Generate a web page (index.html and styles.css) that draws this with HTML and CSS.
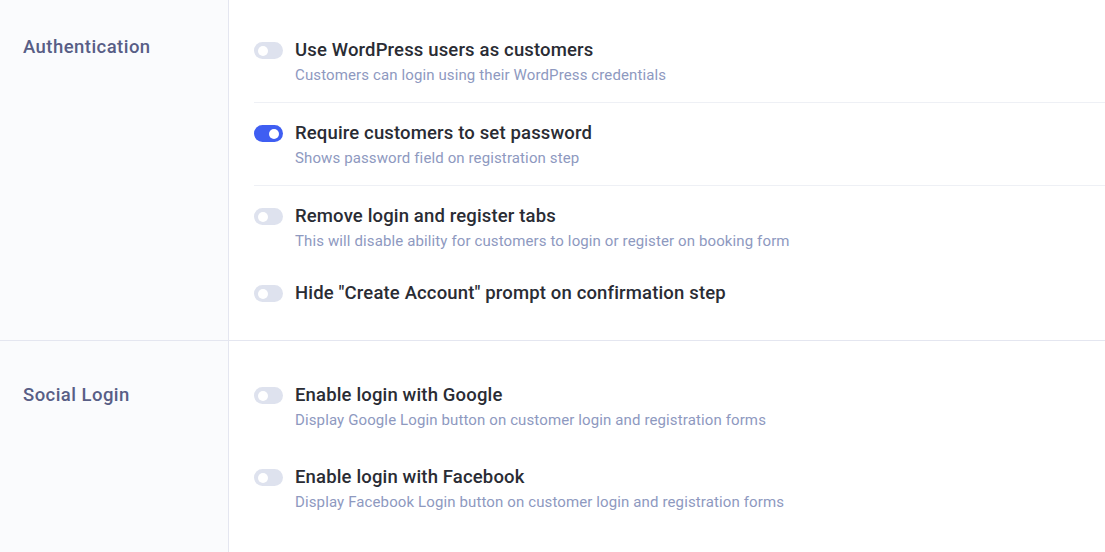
FILE: index.html
```html
<!DOCTYPE html>
<html>
<head>
<meta charset="utf-8">
<link rel="stylesheet" href="styles.css">
</head>
<body>
<div class="page">
  <section class="section sec-auth">
    <div class="label"><h2>Authentication</h2></div>
    <div class="content">
      <div class="row sep">
        <span class="toggle"></span>
        <div class="text">
          <div class="title">Use WordPress users as customers</div>
          <div class="desc">Customers can login using their WordPress credentials</div>
        </div>
      </div>
      <div class="row sep">
        <span class="toggle on"></span>
        <div class="text">
          <div class="title">Require customers to set password</div>
          <div class="desc">Shows password field on registration step</div>
        </div>
      </div>
      <div class="row">
        <span class="toggle"></span>
        <div class="text">
          <div class="title">Remove login and register tabs</div>
          <div class="desc">This will disable ability for customers to login or register on booking form</div>
        </div>
      </div>
      <div class="row tight">
        <span class="toggle"></span>
        <div class="text">
          <div class="title">Hide "Create Account" prompt on confirmation step</div>
        </div>
      </div>
    </div>
  </section>
  <section class="section sec-social">
    <div class="label"><h2>Social Login</h2></div>
    <div class="content">
      <div class="row">
        <span class="toggle"></span>
        <div class="text">
          <div class="title">Enable login with Google</div>
          <div class="desc">Display Google Login button on customer login and registration forms</div>
        </div>
      </div>
      <div class="row">
        <span class="toggle"></span>
        <div class="text">
          <div class="title">Enable login with Facebook</div>
          <div class="desc">Display Facebook Login button on customer login and registration forms</div>
        </div>
      </div>
    </div>
  </section>
</div>
</body>
</html>
```

FILE: styles.css
```css
html, body {
  margin: 0;
  padding: 0;
  background: #ffffff;
  font-family: Roboto, "Liberation Sans", sans-serif;
}
.page {
  width: 1105px;
  height: 552px;
  overflow: hidden;
}
.section {
  display: flex;
}
.sec-auth {
  border-bottom: 1px solid #e4e6f0;
}
.label {
  width: 229px;
  flex: none;
  background: #fafbfd;
  border-right: 1px solid #e4e6f0;
  box-sizing: border-box;
  padding-left: 23px;
}
.label h2 {
  margin: 0;
  font-size: 18.5px;
  font-weight: 500;
  letter-spacing: 0.45px;
  color: #585e86;
  line-height: 24px;
}
.sec-auth .label h2 { padding-top: 35px; }
.sec-social .label h2 { padding-top: 42px; }
.content {
  flex: 1;
  padding-left: 25px;
}
.sec-auth .content { padding: 20px 0 19px 25px; }
.sec-social .content { padding: 24px 0 20px 25px; height: 211px; box-sizing: border-box; }
.row {
  display: flex;
  align-items: flex-start;
  gap: 12px;
  padding: 18px 0 16px;
}
.row.sep {
  border-bottom: 1px solid #eef0f5;
}
.row.tight {
  padding-top: 13px;
}
.toggle {
  flex: none;
  width: 29px;
  height: 17px;
  border-radius: 9px;
  background: #dee2ee;
  position: relative;
  margin-top: 4px;
}
.toggle::after {
  content: "";
  position: absolute;
  left: 4px;
  top: 3.5px;
  width: 10px;
  height: 10px;
  border-radius: 50%;
  background: #ffffff;
}
.toggle.on {
  background: #3f5ef2;
}
.toggle.on::after {
  left: 15px;
}
.title {
  font-size: 18.5px;
  font-weight: 500;
  letter-spacing: 0.15px;
  line-height: 24px;
  color: #2a2c34;
}
.desc {
  margin-top: 2px;
  font-size: 15px;
  letter-spacing: 0.12px;
  line-height: 22px;
  color: #8e99bf;
}
```
